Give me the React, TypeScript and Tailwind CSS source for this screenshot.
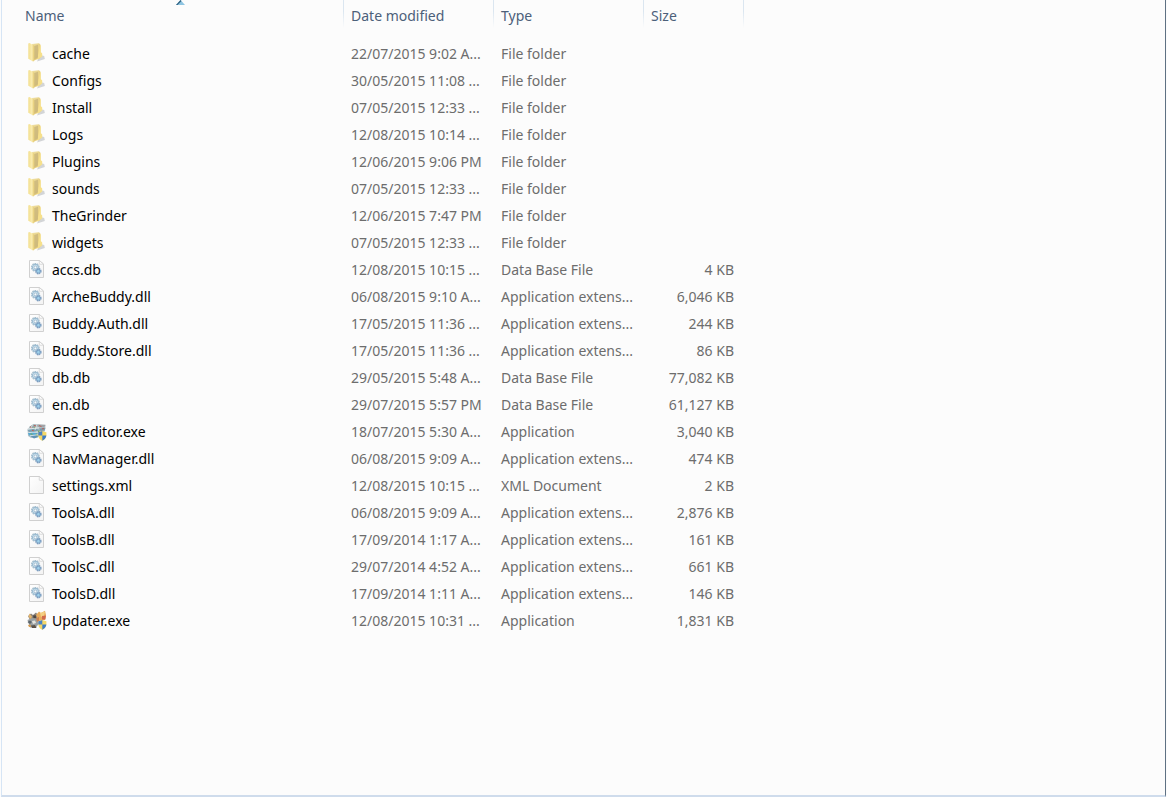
import type { ReactNode } from "react";

type IconKind = "folder" | "gear" | "page" | "gps" | "updater";

type Entry = {
  name: string;
  icon: IconKind;
  date: string;
  type: string;
  size?: string;
};

const entries: Entry[] = [
  { name: "cache", icon: "folder", date: "22/07/2015 9:02 A...", type: "File folder" },
  { name: "Configs", icon: "folder", date: "30/05/2015 11:08 ...", type: "File folder" },
  { name: "Install", icon: "folder", date: "07/05/2015 12:33 ...", type: "File folder" },
  { name: "Logs", icon: "folder", date: "12/08/2015 10:14 ...", type: "File folder" },
  { name: "Plugins", icon: "folder", date: "12/06/2015 9:06 PM", type: "File folder" },
  { name: "sounds", icon: "folder", date: "07/05/2015 12:33 ...", type: "File folder" },
  { name: "TheGrinder", icon: "folder", date: "12/06/2015 7:47 PM", type: "File folder" },
  { name: "widgets", icon: "folder", date: "07/05/2015 12:33 ...", type: "File folder" },
  { name: "accs.db", icon: "gear", date: "12/08/2015 10:15 ...", type: "Data Base File", size: "4 KB" },
  { name: "ArcheBuddy.dll", icon: "gear", date: "06/08/2015 9:10 A...", type: "Application extens...", size: "6,046 KB" },
  { name: "Buddy.Auth.dll", icon: "gear", date: "17/05/2015 11:36 ...", type: "Application extens...", size: "244 KB" },
  { name: "Buddy.Store.dll", icon: "gear", date: "17/05/2015 11:36 ...", type: "Application extens...", size: "86 KB" },
  { name: "db.db", icon: "gear", date: "29/05/2015 5:48 A...", type: "Data Base File", size: "77,082 KB" },
  { name: "en.db", icon: "gear", date: "29/07/2015 5:57 PM", type: "Data Base File", size: "61,127 KB" },
  { name: "GPS editor.exe", icon: "gps", date: "18/07/2015 5:30 A...", type: "Application", size: "3,040 KB" },
  { name: "NavManager.dll", icon: "gear", date: "06/08/2015 9:09 A...", type: "Application extens...", size: "474 KB" },
  { name: "settings.xml", icon: "page", date: "12/08/2015 10:15 ...", type: "XML Document", size: "2 KB" },
  { name: "ToolsA.dll", icon: "gear", date: "06/08/2015 9:09 A...", type: "Application extens...", size: "2,876 KB" },
  { name: "ToolsB.dll", icon: "gear", date: "17/09/2014 1:17 A...", type: "Application extens...", size: "161 KB" },
  { name: "ToolsC.dll", icon: "gear", date: "29/07/2014 4:52 A...", type: "Application extens...", size: "661 KB" },
  { name: "ToolsD.dll", icon: "gear", date: "17/09/2014 1:11 A...", type: "Application extens...", size: "146 KB" },
  { name: "Updater.exe", icon: "updater", date: "12/08/2015 10:31 ...", type: "Application", size: "1,831 KB" },
];

const Svg = ({ children }: { children: ReactNode }) => (
  <svg viewBox="0 1 20 20" className="size-5 shrink-0 overflow-visible" aria-hidden="true">
    {children}
  </svg>
);

const FolderIcon = () => (
  <Svg>
    <path d="M10 18.6 L17.8 16 L17.2 13 L13 12 Z" fill="#a9adb2" opacity="0.5" />
    <path d="M5 1 L12 0.2 L13.4 1.5 V15 L7 17.5 Z" fill="url(#folderBack)" />
    <path d="M13 2 L13.8 2.4 V9 L15.2 10.5 V13.5 L10.5 16.8 V14.5 Z" fill="#f6e08c" />
    <path d="M7.2 3 L11 1.8 V14.5 L7.2 16.5 Z" fill="#c9b57c" opacity="0.8" />
    <path d="M1.3 0.6 L2.4 0 L7.2 2.4 V18 L6 18.6 L1.3 15.8 Z" fill="url(#folderFront)" />
  </Svg>
);

const Page = () => (
  <>
    <path d="M2.5 1.5 H12.4 L16.5 5 V18.5 H2.5 Z" fill="url(#paper)" stroke="#d0d0d0" />
    <path d="M12.3 1.5 V5.2 H16.5 Z" fill="#fff" stroke="#cbcbcb" strokeWidth="0.7" />
  </>
);

const GearIcon = () => (
  <Svg>
    <Page />
    <circle cx="8.4" cy="8.4" r="3.7" fill="none" stroke="#a9bfce" strokeWidth="1.5" strokeDasharray="1.6 0.7" />
    <circle cx="8.4" cy="8.4" r="3" fill="#d3e8f4" stroke="#9dbdd2" strokeWidth="1.1" />
    <circle cx="8.4" cy="8.4" r="1.4" fill="#f7fbfd" stroke="#8fabc0" strokeWidth="0.7" />
    <circle cx="11.4" cy="12.2" r="2.5" fill="none" stroke="#7f9fc0" strokeWidth="1.4" strokeDasharray="1.5 0.5" />
    <circle cx="11.4" cy="12.2" r="1.8" fill="#9fd0ea" stroke="#6c98c0" strokeWidth="0.8" />
  </Svg>
);

const PageIcon = () => (
  <Svg>
    <Page />
  </Svg>
);

const Shield = () => (
  <>
    <path d="M15.3 9.8 C16.6 10.8 18 11.2 19.4 11.2 V14 C19.4 17 17.4 18.8 15.3 19.8 C13.2 18.8 11.3 17 11.3 14 V11.2 C12.7 11.2 14 10.8 15.3 9.8 Z" fill="#f5d866" />
    <path d="M15.3 9.8 V14.6 H11.3 V11.2 C12.7 11.2 14 10.8 15.3 9.8 Z" fill="#4c83c4" />
    <path d="M15.3 14.6 H19.4 C19 17.2 17.2 18.8 15.3 19.8 Z" fill="#3d7bc6" />
  </>
);

const GpsIcon = () => (
  <Svg>
    <path d="M0.5 8 L6 3 L18.5 4 L18 10 L12 16 L4 17 L1 15 Z" fill="#b3c3c9" />
    <path d="M2 6 L6 3.5 L11 4 L9 6.5 L4 7.5 Z" fill="#94a5a8" />
    <path d="M10 3.5 L18.5 3.8 L17 6.5 L11 6 Z" fill="#a1a3a7" />
    <path d="M0.5 9 L8 7.5 L13 9 L8 11 L2 11 Z" fill="#7ca0b2" />
    <path d="M1 12 L6 11 L11 12.5 L8 14.5 L2 14.5 Z" fill="#58aad2" />
    <path d="M3 15 L9 14 L11.5 16 L7 17.5 Z" fill="#5f92b5" />
    <path d="M12 7.5 L18.5 6.8 L17.5 9.5 L13.5 10 Z" fill="#7f98a6" />
    <path d="M3 5.8 L5 6.8 M7 4.4 L9.5 5.2 M12 4.5 L14.5 5.6 M15 7.8 L17 7.5 M5 9.3 L7 10" stroke="#b9645c" strokeWidth="1" />
    <path d="M7 6.5 L9 7.2 M3.5 12.8 L5.5 13.5 M9 12.8 L10 15 M12.5 9.5 L11 11" stroke="#79a766" strokeWidth="1.2" />
    <path d="M1 8 L12 6.8 M1.5 11.5 L11 11 M3 14.8 L10.5 13.8 M6 3 L4 7 M10 3.5 L8 9" stroke="#f0f5f5" strokeWidth="0.7" />
    <Shield />
  </Svg>
);

const UpdaterIcon = () => (
  <Svg>
    <path d="M1 6 L4 3.5 L6 5 L9 2.5 L11 5 L10 10 L3 10 Z" fill="#8b8279" />
    <path d="M9 5 L12 1.5 L14 3 L18 0.8 L19 5 L18 10 L12 11 Z" fill="#e8ab5c" />
    <path d="M13 3 L18 1.5 L17 6 L14 7 Z" fill="#f3d082" />
    <path d="M15 6 L19 5.5 L18.4 9.5 L15 9.5 Z" fill="#d1694c" />
    <path d="M0.5 10 L5 8 L10 9 L11.5 14 L9 17.5 L3 17.5 Z" fill="#9aa0a3" />
    <path d="M2.5 3.5 L5 6.5 L4 9 L1.5 7 Z" fill="#e2b36b" />
    <path d="M6 5.5 L8.8 5.2 L9 8 L6.5 8 Z" fill="#4b4542" />
    <path d="M0.5 12 L3 10.5 L5 12 L3 14 Z" fill="#5d666d" />
    <path d="M5 11 L8 10.5 L9 13 L6 14 Z" fill="#e5e3dc" />
    <path d="M4 15.5 L8 15 L9.5 18 L5 18 Z" fill="#5c5148" />
    <path d="M9 8 L12 7 L12 11 L10 12 Z" fill="#ca8353" />
    <path d="M1 15 L3.5 14.5 L4 17 L2 17 Z" fill="#d49b50" />
    <Shield />
  </Svg>
);

const icons: Record<IconKind, () => ReactNode> = {
  folder: FolderIcon,
  gear: GearIcon,
  page: PageIcon,
  gps: GpsIcon,
  updater: UpdaterIcon,
};

// gradients shared by all the file icons
const IconDefs = () => (
  <svg className="absolute size-0" aria-hidden="true">
    <defs>
      <linearGradient id="folderFront" x1="0" y1="0" x2="1" y2="0">
        <stop offset="0" stopColor="#f3df8e" />
        <stop offset="0.6" stopColor="#faecb0" />
        <stop offset="1" stopColor="#e3c970" />
      </linearGradient>
      <linearGradient id="folderBack" x1="0" y1="0" x2="1" y2="1">
        <stop offset="0" stopColor="#efe0a4" />
        <stop offset="1" stopColor="#e2c468" />
      </linearGradient>
      <linearGradient id="paper" x1="0" y1="0" x2="1" y2="1">
        <stop offset="0" stopColor="#ffffff" />
        <stop offset="1" stopColor="#f3f3f3" />
      </linearGradient>
    </defs>
  </svg>
);

const HeaderCell = ({ label, first }: { label: string; first?: boolean }) => (
  <th scope="col" aria-sort={first ? "ascending" : undefined} className="relative h-10 p-0 text-left align-top font-normal">
    <button type="button" className={`block h-8 w-full text-left text-[#4c607a] ${first ? "pl-[23px]" : "pl-[7px]"}`}>
      {label}
    </button>
    {first && (
      <svg viewBox="0 0 9 5" className="absolute top-0 left-[174px] h-[5px] w-[9px]" aria-hidden="true">
        <path d="M4.5 0 L9 5 H0 Z" fill="#8ec5e2" />
        <path d="M4.5 0 L0 5 L1.5 5 L5.5 1 Z" fill="#2f5f7d" />
      </svg>
    )}
    <span className="absolute top-0 right-0 h-7 w-px bg-linear-to-b from-[#dbe6f0] from-40% to-[#fcfcfc]" />
  </th>
);

const Row = ({ entry }: { entry: Entry }) => {
  const Icon = icons[entry.icon];
  return (
    <tr className="h-[27px]">
      <td className="p-0 pl-[25px] text-black">
        <div className="flex items-center gap-[5px]">
          <Icon />
          <span>{entry.name}</span>
        </div>
      </td>
      <td className="p-0 pl-[7px]">{entry.date}</td>
      <td className="p-0 pl-[7px]">{entry.type}</td>
      <td className="p-0 pr-[10px] text-right">{entry.size}</td>
    </tr>
  );
};

const App = () => {
  return (
    <div className="flex min-h-screen bg-[#fcfcfc] pl-px pr-px font-['Noto_Sans','Open_Sans',sans-serif] text-[14px] leading-5 text-[#6d6d6d]">
      <IconDefs />
      <main className="flex-1 border-r border-b-2 border-l border-r-[#5f7183] border-b-[#cfdcec] border-l-[#d6e5f5]">
        <table className="w-[742px] table-fixed border-collapse whitespace-nowrap">
          <colgroup>
            <col className="w-[342px]" />
            <col className="w-[150px]" />
            <col className="w-[150px]" />
            <col className="w-[100px]" />
          </colgroup>
          <thead>
            <tr>
              <HeaderCell label="Name" first />
              <HeaderCell label="Date modified" />
              <HeaderCell label="Type" />
              <HeaderCell label="Size" />
            </tr>
          </thead>
          <tbody>
            {entries.map((entry) => (
              <Row entry={entry} key={entry.name} />
            ))}
          </tbody>
        </table>
      </main>
    </div>
  );
};

export default App;
